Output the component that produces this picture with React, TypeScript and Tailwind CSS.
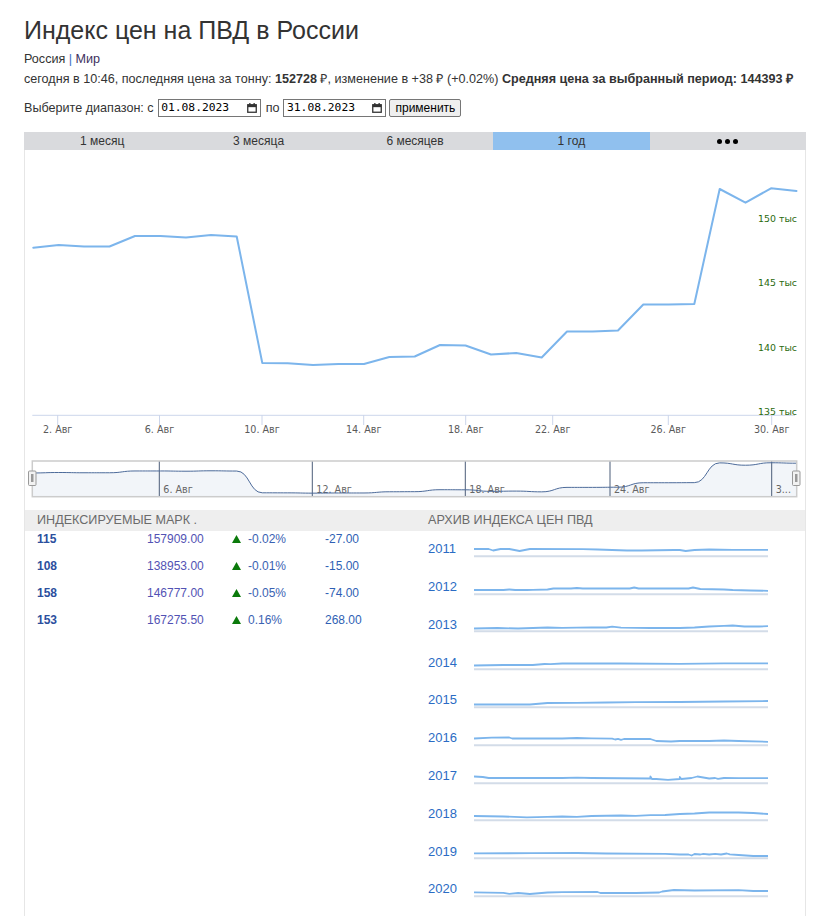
import React from "react";

type Pt = [number, number];

// main chart points, page coordinates (viewBox starts at 25,150)
const mainPts: Pt[] = [
  [33.3, 247.7], [58.7, 245], [84, 246.5], [109.5, 246.5], [135, 236], [160.5, 236],
  [186, 237.5], [211, 235], [236.7, 236.5], [262.3, 363], [287.7, 363.3], [313, 365],
  [338.5, 364], [364, 364], [389.3, 357], [414.7, 356.5], [440, 345], [465.5, 345.5],
  [491, 354.5], [516.3, 353], [541.7, 357.5], [567, 331.5], [592.5, 331.5], [618, 330.5],
  [643.3, 304.5], [668.7, 304.5], [694.3, 304], [719.7, 189], [745.5, 202.7], [771, 188.3],
  [796.5, 191],
];

const xTicks: [number, string][] = [
  [57.7, "2. Авг"], [159.5, "6. Авг"], [262, "10. Авг"], [363.7, "14. Авг"],
  [465.7, "18. Авг"], [552.7, "22. Авг"], [668.3, "26. Авг"], [771.7, "30. Авг"],
];

const yLabels: [number, string][] = [
  [221.5, "150 тыс"], [286, "145 тыс"], [350.5, "140 тыс"], [415, "135 тыс"],
];

const navGrid: [number, string][] = [
  [159.3, "6. Авг"], [312.3, "12. Авг"], [465.3, "18. Авг"], [610, "24. Авг"], [771.7, "3..."],
];

const tabs = ["1 месяц", "3 месяца", "6 месяцев", "1 год"];

const marks = [
  { name: "115", price: "157909.00", pct: "-0.02%", diff: "-27.00" },
  { name: "108", price: "138953.00", pct: "-0.01%", diff: "-15.00" },
  { name: "158", price: "146777.00", pct: "-0.05%", diff: "-74.00" },
  { name: "153", price: "167275.50", pct: "0.16%", diff: "268.00" },
];

const archive: [string, Pt[]][] = [
  ["2011", [[0, 9], [0.05, 9], [0.065, 10.5], [0.09, 9], [0.12, 9], [0.155, 11], [0.19, 9], [0.37, 9.2], [0.42, 9.5], [0.52, 10.5], [0.57, 10.5], [0.68, 10], [0.7, 10], [0.72, 11], [0.75, 10], [0.8, 9.5], [0.88, 9.8], [1, 9.8]]],
  ["2012", [[0, 12], [0.1, 12], [0.12, 11.5], [0.14, 12], [0.18, 12], [0.2, 11.8], [0.25, 11.5], [0.27, 10.5], [0.33, 10.5], [0.35, 10], [0.37, 10.5], [0.53, 10.5], [0.545, 9.5], [0.56, 10.5], [0.73, 10.5], [0.745, 9.5], [0.77, 11], [0.85, 11.5], [0.88, 12], [0.94, 12.5], [1, 12.8]]],
  ["2013", [[0, 13.5], [0.08, 13], [0.15, 13.5], [0.25, 12.5], [0.3, 12.8], [0.4, 12.3], [0.45, 12.5], [0.47, 11.7], [0.5, 12.6], [0.6, 13], [0.7, 13], [0.75, 12.5], [0.8, 11.5], [0.85, 10.8], [0.88, 10.5], [0.92, 11.5], [0.97, 11.5], [1, 11.2]]],
  ["2014", [[0, 12.5], [0.1, 12], [0.2, 12], [0.24, 11], [0.26, 11.2], [0.3, 10.5], [0.5, 10.5], [0.7, 10.8], [0.85, 10.3], [1, 10.3]]],
  ["2015", [[0, 13.5], [0.19, 13.5], [0.25, 12], [0.35, 11.8], [0.45, 11.5], [0.55, 11.2], [0.7, 11], [0.85, 10.5], [1, 10]]],
  ["2016", [[0, 9.5], [0.06, 8.7], [0.12, 8.5], [0.13, 9.5], [0.3, 9.5], [0.35, 9], [0.4, 9.3], [0.47, 9.7], [0.48, 10.5], [0.49, 9.8], [0.5, 10.8], [0.51, 10], [0.6, 10], [0.62, 12], [0.67, 12.5], [0.7, 12], [0.8, 12], [0.85, 11.5], [0.9, 12], [1, 12.8]]],
  ["2017", [[0, 9.5], [0.03, 10], [0.05, 11], [0.3, 11], [0.35, 10.6], [0.4, 11], [0.6, 11.5], [0.6, 9.5], [0.605, 12], [0.62, 12], [0.66, 12.8], [0.7, 12], [0.7, 10], [0.705, 12], [0.74, 11], [0.76, 9.5], [0.78, 10.5], [0.8, 11.5], [0.82, 11], [0.83, 11.8], [0.85, 11], [0.9, 11.2], [1, 11.2]]],
  ["2018", [[0, 12], [0.1, 12.5], [0.18, 13.3], [0.25, 12.8], [0.3, 12.5], [0.35, 12.8], [0.4, 12], [0.5, 11.5], [0.55, 11.8], [0.6, 11.2], [0.65, 11], [0.7, 10], [0.75, 9.5], [0.8, 8.5], [0.9, 8.5], [0.95, 9], [1, 10]]],
  ["2019", [[0, 11.3], [0.2, 11.2], [0.35, 11], [0.45, 11.5], [0.65, 11.8], [0.7, 12.5], [0.73, 12.5], [0.74, 13.5], [0.75, 12], [0.77, 12.5], [0.78, 11.8], [0.8, 12.5], [0.82, 11.8], [0.84, 12.5], [0.86, 11.5], [0.87, 12.3], [0.9, 13], [0.95, 14], [1, 14]]],
  ["2020", [[0, 12.4], [0.1, 12.8], [0.12, 13.8], [0.15, 13], [0.19, 14], [0.25, 12.5], [0.3, 12.2], [0.42, 12], [0.43, 13], [0.55, 13], [0.63, 12.5], [0.64, 11.5], [0.68, 10], [0.75, 10.5], [0.9, 10.2], [0.95, 11], [1, 11]]],
];

function smoothPath(pts: Pt[]) {
  let d = `M${pts[0][0]},${pts[0][1]}`;
  for (let i = 1; i < pts.length; i++) {
    const [x0, y0] = pts[i - 1];
    const [x1, y1] = pts[i];
    const dx = (x1 - x0) / 2;
    d += ` C${x0 + dx},${y0} ${x1 - dx},${y1} ${x1},${y1}`;
  }
  return d;
}

function CalendarIcon() {
  return (
    <svg width="10" height="10" viewBox="0 0 10 10" className="shrink-0">
      <rect x="0.75" y="1.75" width="8.5" height="7.5" fill="none" stroke="#333" strokeWidth="1.3" />
      <rect x="0.75" y="1.75" width="8.5" height="2.4" fill="#333" />
      <rect x="2.2" y="0" width="1.3" height="2" fill="#333" />
      <rect x="6.5" y="0" width="1.3" height="2" fill="#333" />
    </svg>
  );
}

function DateBox({ value }: { value: string }) {
  return (
    <div className="flex h-[18px] w-[103px] items-center justify-between border border-[#767676] bg-white pl-[2.5px] pr-[3px]">
      <span className="font-['DejaVu_Sans_Mono',monospace] text-[11.3px] leading-none text-black">{value}</span>
      <CalendarIcon />
    </div>
  );
}

function MainChart() {
  const nav: Pt[] = mainPts.map(([x, y]) => [x, 462.7 + (y - 188) * 0.172]);
  nav[0] = [32.3, nav[0][1]];
  nav[nav.length - 1] = [796.7, nav[nav.length - 1][1]];
  const navLine = smoothPath(nav);

  return (
    <svg width="780" height="355" viewBox="25 150 780 355" className="block font-['DejaVu_Sans',sans-serif]">
      {/* plot */}
      <line x1="32.3" y1="415.3" x2="795" y2="415.3" stroke="#ccd6eb" strokeWidth="1" />
      {xTicks.map(([x, label]) => (
        <g key={label}>
          <line x1={x} y1="415" x2={x} y2="425" stroke="#ccd6eb" strokeWidth="1" />
          <text x={x} y="433" textAnchor="middle" fontSize="9.6" fill="#5a5a5a">{label}</text>
        </g>
      ))}
      {yLabels.map(([y, label]) => (
        <text key={label} x="797" y={y} textAnchor="end" fontSize="9.4" fill="#2a6a0e">{label}</text>
      ))}
      <polyline
        points={mainPts.map((p) => p.join(",")).join(" ")}
        fill="none"
        stroke="#7cb5ec"
        strokeWidth="2"
        strokeLinejoin="round"
        strokeLinecap="round"
      />

      {/* navigator */}
      <path d={`${navLine} L796.7,497 L32.3,497 Z`} fill="#f2f5f9" />
      {navGrid.map(([x, label]) => (
        <g key={label}>
          <line x1={x} y1="461" x2={x} y2="497" stroke="#4b5d78" strokeWidth="1" />
          <text x={x + 4} y="493" fontSize="9.6" fill="#666">{label}</text>
        </g>
      ))}
      <path d={navLine} fill="none" stroke="#4d6b9a" strokeWidth="1" />
      <rect x="32.3" y="461" width="764.4" height="35.7" fill="none" stroke="#cccccc" strokeWidth="1.5" />
      {[28.5, 792.5].map((x) => (
        <g key={x}>
          <rect x={x} y="471" width="7.5" height="14.5" rx="1" fill="#f2f2f2" stroke="#999" strokeWidth="1" />
          <rect x={x + 2.5} y="474" width="2.5" height="8" fill="#999" />
        </g>
      ))}
    </svg>
  );
}

function Sparkline({ pts }: { pts: Pt[] }) {
  const w = 294;
  return (
    <svg width={w} height="18" viewBox={`0 0 ${w} 18`} className="block">
      <line x1="0" y1="16.3" x2={w} y2="16.3" stroke="#d3dce8" strokeWidth="2" />
      <polyline
        points={pts.map(([x, y]) => `${(x * w).toFixed(1)},${y}`).join(" ")}
        fill="none"
        stroke="#7cb5ec"
        strokeWidth="1.8"
        strokeLinejoin="round"
      />
    </svg>
  );
}

function Triangle() {
  return (
    <svg width="9" height="8" viewBox="0 0 9 8" className="block">
      <polygon points="4.5,0 9,8 0,8" fill="#0b7a0b" />
    </svg>
  );
}

export default function App() {
  return (
    <div className="min-h-screen bg-white px-6 pt-[15px] font-['Liberation_Sans',Arial,sans-serif] text-[#333]">
      <h1 className="text-[25px] leading-[30px]">Индекс цен на ПВД в России</h1>
      <div className="mt-[4px] text-[12.6px] leading-[20px]">
        Россия <span className="text-[#3a6fc4]">|</span> <span className="text-[#40305e]">Мир</span>
      </div>
      <div className="text-[12.6px] leading-[20px]">
        сегодня в 10:46, последняя цена за тонну: <b>152728</b> ₽, изменение в +38 ₽ (+0.02%){" "}
        <b>Средняя цена за выбранный период: 144393 ₽</b>
      </div>

      {/* range picker */}
      <div className="mt-[9px] flex h-[20px] items-center text-[12.6px]">
        <span>Выберите диапазон: с</span>
        <div className="ml-[4px]">
          <DateBox value="01.08.2023" />
        </div>
        <span className="ml-[5px] mr-[4px]">по</span>
        <DateBox value="31.08.2023" />
        <button className="ml-[3px] h-[18px] rounded-[2px] border border-[#767676] bg-[#efefef] px-[5px] text-[12px] leading-none text-black">
          применить
        </button>
      </div>

      <div className="mt-[14px] w-[782px] border-x border-[#e6e6e6]">
        {/* period tabs */}
        <div className="-mx-px grid h-[18px] grid-cols-5 bg-[#d9dadd] text-[12px] leading-[18px]">
          {tabs.map((t) => (
            <div key={t} className={`text-center ${t === "1 год" ? "bg-[#90c0ee]" : ""}`}>
              {t}
            </div>
          ))}
          <div className="flex items-center justify-center gap-[3px]">
            <span className="h-[5px] w-[5px] rounded-full bg-black" />
            <span className="h-[5px] w-[5px] rounded-full bg-black" />
            <span className="h-[5px] w-[5px] rounded-full bg-black" />
          </div>
        </div>

        <MainChart />

        {/* section headers */}
        <div className="mt-[5px] grid h-[21px] grid-cols-[385px_395px] bg-[#eeeeee] text-[12.6px] leading-[21px] text-[#6b6b6b]">
          <div className="pl-[12px]">ИНДЕКСИРУЕМЫЕ МАРК .</div>
          <div className="pl-[18px]">АРХИВ ИНДЕКСА ЦЕН ПВД</div>
        </div>

        <div className="grid grid-cols-[385px_395px]">
          {/* marks table */}
          <div className="pl-[12px] pt-[1px] text-[12px] leading-[14px]">
            {marks.map((m) => (
              <div key={m.name} className="flex h-[27px]">
                <div className="w-[110px] font-bold text-[#2c4f9e]">{m.name}</div>
                <div className="w-[85px] text-[#5252b4]">{m.price}</div>
                <div className="flex w-[16px] pt-[3px]">
                  <Triangle />
                </div>
                <div className="w-[77px] text-[#3a62b2]">{m.pct}</div>
                <div className="text-[#2f5fb4]">{m.diff}</div>
              </div>
            ))}
          </div>

          {/* archive */}
          <div className="-mt-[1px] pl-[18px]">
            {archive.map(([year, pts]) => (
              <div key={year} className="flex h-[37.8px] items-center">
                <div className="w-[46px] text-[13px] text-[#2b6cc4]">{year}</div>
                <Sparkline pts={pts} />
              </div>
            ))}
            <div className="h-[8px]" />
          </div>
        </div>
      </div>
    </div>
  );
}
